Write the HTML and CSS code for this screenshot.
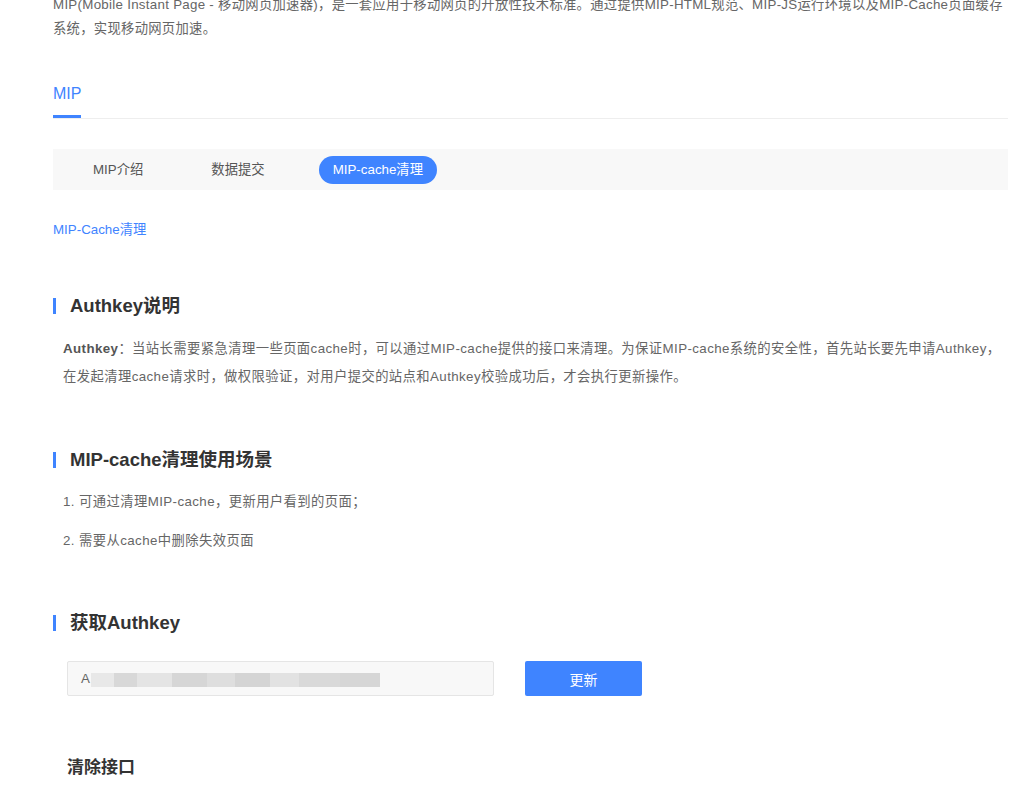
FILE: index.html
```html
<!DOCTYPE html>
<html lang="zh-CN">
<head>
<meta charset="utf-8">
<title>MIP-cache清理</title>
<link rel="stylesheet" href="styles.css">
</head>
<body>
<div class="page">
  <p class="intro">MIP(Mobile Instant Page - 移动网页加速器)，是一套应用于移动网页的开放性技术标准。通过提供MIP-HTML规范、MIP-JS运行环境以及MIP-Cache页面缓存系统，实现移动网页加速。</p>

  <div class="tabs">
    <span class="tab active">MIP</span>
  </div>

  <div class="subnav">
    <span class="subitem">MIP介绍</span>
    <span class="subitem">数据提交</span>
    <span class="subitem current">MIP-cache清理</span>
  </div>

  <div class="crumb">MIP-Cache清理</div>

  <h2 class="heading first">Authkey说明</h2>
  <p class="desc"><b>Authkey</b>：当站长需要紧急清理一些页面cache时，可以通过MIP-cache提供的接口来清理。为保证MIP-cache系统的安全性，首先站长要先申请Authkey，在发起清理cache请求时，做权限验证，对用户提交的站点和Authkey校验成功后，才会执行更新操作。</p>

  <h2 class="heading">MIP-cache清理使用场景</h2>
  <ol class="list">
    <li>1. 可通过清理MIP-cache，更新用户看到的页面；</li>
    <li>2. 需要从cache中删除失效页面</li>
  </ol>

  <h2 class="heading third">获取Authkey</h2>
  <div class="keyrow">
    <div class="keybox"><span class="keychar">A</span><span class="blur"></span></div>
    <button class="btn">更新</button>
  </div>

  <h3 class="subhead">清除接口</h3>
</div>
</body>
</html>
```
FILE: styles.css
```css
html, body {
  margin: 0;
  padding: 0;
  background: #fff;
}
body {
  font-family: "Liberation Sans", "Noto Sans CJK SC", sans-serif;
  color: #666;
  font-size: 13.33px;
}
.page {
  width: 955px;
  padding-left: 53px;
  margin-top: -7px;
}
.intro {
  margin: 0;
  line-height: 24px;
  color: #666;
  letter-spacing: 0.28px;
}
.tabs {
  margin-top: 42px;
  border-bottom: 1px solid #eeeeee;
  display: flex;
}
.tab {
  font-size: 16px;
  line-height: 22px;
  padding-bottom: 10px;
  color: #3f84ff;
  border-bottom: 3px solid #3f84ff;
}
.subnav {
  margin-top: 30px;
  height: 41px;
  background: #f8f8f8;
  display: flex;
  align-items: center;
  gap: 40px;
  padding-left: 26px;
}
.subitem {
  padding: 0 14px;
  height: 28px;
  line-height: 28px;
  color: #555;
  border-radius: 14px;
}
.subitem.current {
  background: #3f84ff;
  color: #fff;
}
.crumb {
  margin-top: 30px;
  line-height: 20px;
  color: #3f84ff;
}
.heading {
  margin: 57px 0 0 0;
  font-size: 18.5px;
  line-height: 24px;
  font-weight: bold;
  color: #333;
  display: flex;
  align-items: center;
  gap: 14px;
}
.heading::before {
  content: "";
  width: 3px;
  height: 16px;
  background: #3f84ff;
}
.heading.first {
  margin-top: 54px;
}
.heading.third {
  margin-top: 60px;
}
.desc {
  margin: 17px 0 0 0;
  padding-left: 10px;
  line-height: 28px;
  color: #666;
  letter-spacing: 0.4px;
}
.desc b {
  color: #555;
}
.list {
  margin: 20px 0 0 0;
  padding: 0 0 0 10px;
  list-style: none;
  letter-spacing: 0.4px;
}
.list li {
  line-height: 20px;
  margin-bottom: 19px;
}
.list li:last-child {
  margin-bottom: 0;
}
.keyrow {
  margin-top: 26px;
  padding-left: 14px;
  display: flex;
  gap: 31px;
}
.keybox {
  width: 425px;
  height: 33px;
  background: #f8f8f8;
  border: 1px solid #e5e5e5;
  border-radius: 2px;
  display: flex;
  align-items: center;
}
.keychar {
  margin-left: 13px;
  color: #666;
}
.blur {
  display: inline-block;
  width: 289px;
  height: 14px;
  margin-left: 1px;
  margin-top: 2px;
  background: linear-gradient(90deg, #e8e8e8 0 8%, #d8d8d8 8% 16%, #e4e4e4 16% 28%, #d6d6d6 28% 40%, #dedede 40% 50%, #d4d4d4 50% 62%, #e2e2e2 62% 72%, #d9d9d9 72% 86%, #d6d6d6 86% 100%);
}
.btn {
  width: 117px;
  height: 35px;
  border: none;
  border-radius: 2px;
  background: #3f84ff;
  color: #fff;
  font-family: inherit;
  font-size: 14px;
  padding: 0;
}
.subhead {
  margin: 61px 0 0 14px;
  font-size: 17px;
  line-height: 22px;
  font-weight: bold;
  color: #333;
}
```
